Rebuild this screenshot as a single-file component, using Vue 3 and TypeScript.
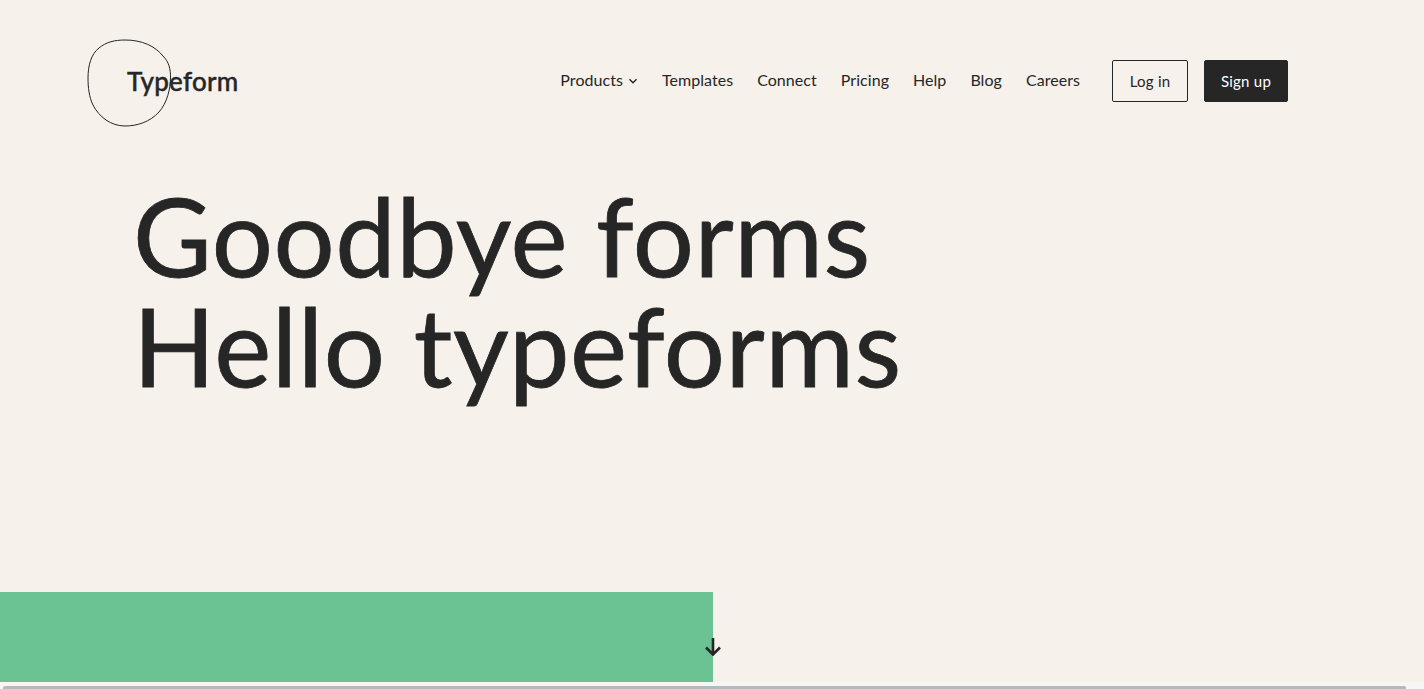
<script setup lang="ts">
const links: string[] = ['Templates', 'Connect', 'Pricing', 'Help', 'Blog', 'Careers']
</script>

<template>
  <div class="page">
    <div class="content">
      <header class="header">
        <a class="logo">
          <svg class="blob" width="85" height="89" viewBox="0 0 85 89" fill="none">
            <path d="M38 1C55 1 68 7 76 17C82 23 83.5 30 83.5 38C83.5 50 80 64 72 73C63 83 50 87 38 87C24 87 12 78 6 66C2 58 1 48 1 39C1 27 4 15 12 9C19 3 28 1 38 1Z" stroke="#262627" stroke-width="1" />
          </svg>
          <span class="wordmark">Typeform</span>
        </a>
        <nav class="nav">
          <a class="link">Products
            <svg class="chev" width="10" height="6" viewBox="0 0 10 6" fill="none">
              <path d="M1.5 1.2L5 4.7L8.5 1.2" stroke="#262627" stroke-width="1.4" />
            </svg>
          </a>
          <a v-for="l in links" :key="l" class="link">{{ l }}</a>
        </nav>
        <div class="actions">
          <button class="btn outline">Log in</button>
          <button class="btn solid">Sign up</button>
        </div>
      </header>
      <main class="hero">
        <h1 class="title">Goodbye forms<br />Hello typeforms</h1>
      </main>
      <div class="progress">
        <div class="fill"></div>
        <svg class="arrow" width="18" height="18" viewBox="0 0 18 18" fill="none">
          <path d="M9 0V16M2 9.5L9 16.5L16 9.5" stroke="#262627" stroke-width="2.6" />
        </svg>
      </div>
    </div>
    <div class="scrollbar"><div class="thumb"></div></div>
  </div>
</template>

<style scoped>
.page {
  height: 689px;
  display: flex;
  flex-direction: column;
  overflow: hidden;
  background: #f1f1f1;
  font-family: Lato, "Open Sans", sans-serif;
  color: #262627;
}
.content {
  height: 682px;
  display: flex;
  flex-direction: column;
  background: #f6f1eb;
}
.header {
  height: 160px;
  flex: none;
  display: flex;
  align-items: flex-start;
  padding: 39px 136px 0 87px;
  box-sizing: border-box;
}
.logo {
  position: relative;
  width: 152px;
  height: 89px;
  display: flex;
  align-items: center;
  padding-left: 40px;
  box-sizing: border-box;
}
.blob {
  position: absolute;
  left: 0;
  top: 0;
}
.wordmark {
  font-size: 26px;
  font-weight: 500;
  letter-spacing: 0.25px;
  margin-top: -5px;
  -webkit-text-stroke: 0.4px #262627;
}
.nav {
  margin-left: auto;
  display: flex;
  gap: 24px;
  height: 42px;
  align-items: center;
  margin-top: 21px;
  font-size: 16px;
  margin-right: 32px;
}
.link {
  display: flex;
  align-items: center;
  gap: 5px;
  margin-top: -3px;
  letter-spacing: 0.05px;
}
.chev {
  margin-top: 2px;
}
.actions {
  display: flex;
  gap: 16px;
  margin-top: 21px;
}
.btn {
  height: 42px;
  box-sizing: border-box;
  font-family: inherit;
  font-size: 15px;
  letter-spacing: 0.25px;
  border-radius: 2px;
  border: 1px solid #262627;
  padding: 0;
}
.outline {
  width: 76px;
  background: transparent;
  color: #262627;
}
.solid {
  width: 84px;
  background: #262627;
  color: #fff;
}
.hero {
  flex: 1;
  padding: 20px 0 0 133px;
}
.title {
  margin: 0;
  font-size: 108px;
  line-height: 110px;
  font-weight: 400;
  letter-spacing: 0.5px;
  white-space: nowrap;
  -webkit-text-stroke: 0.8px #262627;
}
.progress {
  position: relative;
  height: 90px;
  flex: none;
}
.fill {
  width: 713px;
  height: 100%;
  background: #6bc393;
}
.arrow {
  position: absolute;
  left: 704px;
  top: 46px;
}
.scrollbar {
  height: 7px;
  flex: none;
  display: flex;
  align-items: flex-end;
  padding: 0 18px 0 3px;
  background: #f6f6f6;
}
.thumb {
  flex: 1;
  height: 3px;
  background: #b9b9b9;
  border-radius: 2px 2px 0 0;
}
</style>
